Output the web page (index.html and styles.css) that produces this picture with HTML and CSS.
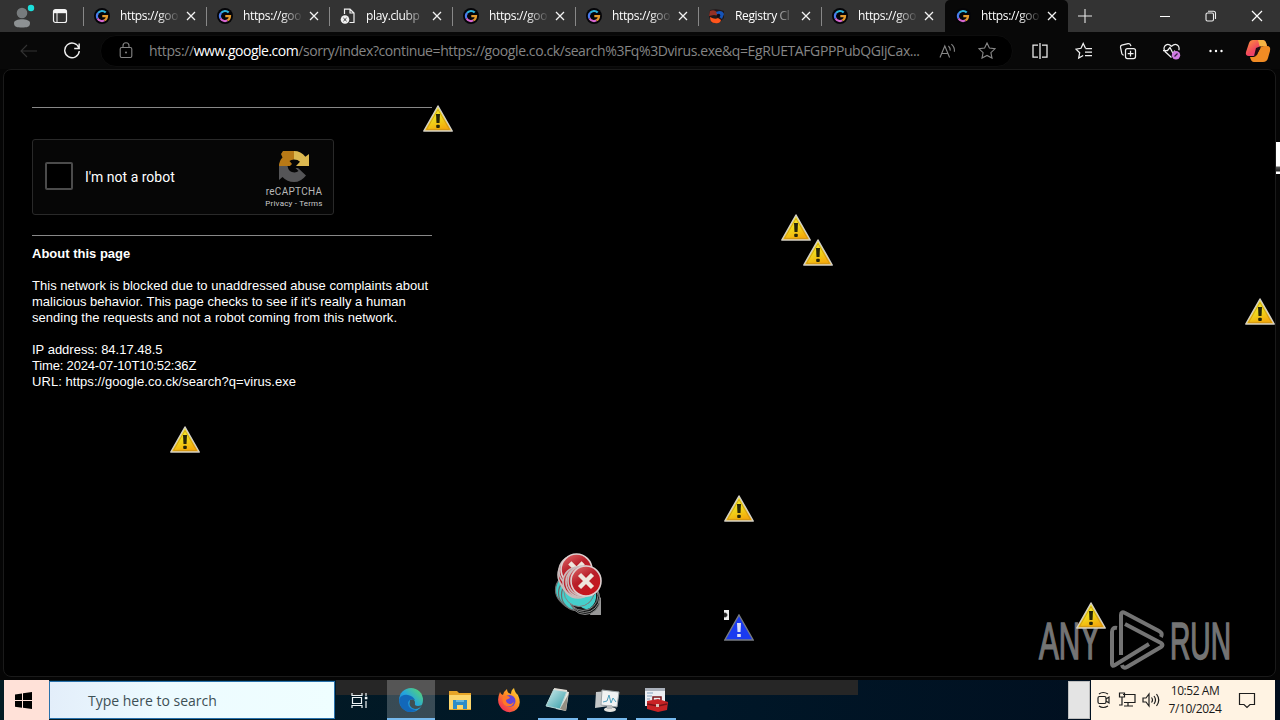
FILE: index.html
```html
<!DOCTYPE html>
<html lang="en">
<head>
<meta charset="utf-8">
<title>https://google.co.ck/search?q=virus.exe</title>
<link rel="stylesheet" href="styles.css">
</head>
<body>
<svg class="defs" width="0" height="0">
  <defs>
    <linearGradient id="gold" x1="0" y1="0" x2="0.4" y2="1"><stop offset="0" stop-color="#f8f83a"/><stop offset=".6" stop-color="#f0d81c"/><stop offset="1" stop-color="#f5ac0c"/></linearGradient>
    <linearGradient id="redball" x1="0" y1="0" x2="0.6" y2="1"><stop offset="0" stop-color="#e07070"/><stop offset=".5" stop-color="#b81e28"/><stop offset="1" stop-color="#c8141c"/></linearGradient>
    <linearGradient id="edge" x1="0" y1="1" x2="1" y2="0"><stop offset="0" stop-color="#1464bd"/><stop offset=".5" stop-color="#24a5df"/><stop offset="1" stop-color="#5fdc62"/></linearGradient>
    <linearGradient id="fire" x1="1" y1="0" x2="0.2" y2="1"><stop offset="0" stop-color="#ffe13a"/><stop offset=".5" stop-color="#ff8a22"/><stop offset="1" stop-color="#f0245c"/></linearGradient>
    <linearGradient id="pilot" x1="0" y1="0" x2="1" y2="1"><stop offset="0" stop-color="#ff9a3a"/><stop offset=".5" stop-color="#f0465e"/><stop offset="1" stop-color="#e03a9a"/></linearGradient>
    <linearGradient id="pad" x1="0" y1="0" x2="1" y2="1"><stop offset="0" stop-color="#d3eeee"/><stop offset="1" stop-color="#2f9ba6"/></linearGradient>
    <symbol id="x" viewBox="0 0 10 10"><path d="M1 1 9 9M9 1 1 9" stroke="#f2f2f2" stroke-width="1.3" fill="none"/></symbol>
    <symbol id="g" viewBox="0 0 16 16">
      <circle cx="8" cy="8" r="8" fill="#050508"/>
      <g fill="none" stroke-width="2.2">
        <path d="M11.7 4.6A5 5 0 0 0 4.1 4.9" stroke="#2fb4dc"/>
        <path d="M4.1 4.9A5 5 0 0 0 3.6 10.4" stroke="#4b7cf0"/>
        <path d="M3.6 10.4A5 5 0 0 0 10.4 12.4" stroke="#d567cf"/>
        <path d="M10.4 12.4A5 5 0 0 0 13 8.2H8.3" stroke="#e49a2c"/>
      </g>
    </symbol>
    <symbol id="warn" viewBox="0 0 30 27">
      <path d="M15 1 29.2 26H.8Z" fill="url(#gold)" stroke="#d4d0c4" stroke-width="1.5" stroke-linejoin="round"/>
      <path d="M15 4.5 26.4 24.4H3.6Z" fill="none" stroke="#c58c16" stroke-width=".7"/>
      <path d="M13 9h4l-.5 9h-3z" fill="#252408"/><rect x="13.2" y="19.7" width="3.6" height="3.3" rx="1" fill="#252408"/>
    </symbol>
    <symbol id="err" viewBox="0 0 32 32">
      <circle cx="16" cy="16" r="15" fill="url(#redball)" stroke="#ddd0d0" stroke-width="1.6"/>
      <path d="M9.5 9.5 22.5 22.5M22.5 9.5 9.5 22.5" stroke="#eee6dc" stroke-width="4.4"/>
    </symbol>
    <symbol id="ball" viewBox="0 0 32 32"><circle cx="16" cy="16" r="15" fill="url(#redball)" stroke="#c9bcbc" stroke-width="1.6"/></symbol>
  </defs>
</svg>

<div class="screen">
  <header class="tabstrip">
    <div class="lead">
      <svg class="avatar" width="24" height="28" viewBox="0 0 24 28"><circle cx="11" cy="13" r="5.3" fill="#777b7d"/><path d="M3 23c0-5 16-5 16 0 0 4-3 4.5-8 4.5S3 27 3 23Z" fill="#8d9193"/><circle cx="20" cy="8" r="3.2" fill="#1ce0dc"/></svg>
      <svg class="space" width="16" height="16" viewBox="0 0 16 16"><rect x="1.5" y="1.5" width="13" height="13" rx="2" fill="none" stroke="#f4f4f4" stroke-width="1.2"/><path d="M2 2h12v3.2H2z" fill="#f4f4f4"/><path d="M5 5v9" stroke="#f4f4f4"/></svg>
    </div>
    <div class="tab"><svg class="fav"><use href="#g"/></svg><span class="label">https://goo</span><svg class="close"><use href="#x"/></svg></div>
    <div class="tab"><svg class="fav"><use href="#g"/></svg><span class="label">https://goo</span><svg class="close"><use href="#x"/></svg></div>
    <div class="tab"><svg class="fav" viewBox="0 0 16 16"><path d="M4.5 6V1.2H10L14 5v9.5H9.5M10 1.2V5h4" fill="none" stroke="#f0f0f0" stroke-width="1.2"/><circle cx="5" cy="11.5" r="4.3" fill="#f0f0f0"/><path d="M3.4 10l3.2 3.2M6.6 10l-3.2 3.2" stroke="#333"/></svg><span class="label">play.clubp</span><svg class="close"><use href="#x"/></svg></div>
    <div class="tab"><svg class="fav"><use href="#g"/></svg><span class="label">https://goo</span><svg class="close"><use href="#x"/></svg></div>
    <div class="tab"><svg class="fav"><use href="#g"/></svg><span class="label">https://goo</span><svg class="close"><use href="#x"/></svg></div>
    <div class="tab"><svg class="fav" viewBox="0 0 16 16"><path d="M1 2Q8 0 15 3V10L10 15H3L0 9Z" fill="#211719"/><path d="M1 3q4-2 7 1l2 4-5-1-5 1z" fill="#943025"/><path d="M7 4q6-3 8 2l-2 5-4-3z" fill="#1554b8"/><path d="M1 9q5 3 8 1l3 2q-1 4-6 3-5 0-5-6" fill="#ff551c"/><circle cx="9.5" cy="7.5" r="1.8" fill="#120a18"/></svg><span class="label fade-early">Registry Cl</span><svg class="close"><use href="#x"/></svg></div>
    <div class="tab last"><svg class="fav"><use href="#g"/></svg><span class="label">https://goo</span><svg class="close"><use href="#x"/></svg></div>
    <div class="tab active"><svg class="fav"><use href="#g"/></svg><span class="label">https://goo</span><svg class="close"><use href="#x"/></svg></div>
    <svg class="plus" width="14" height="14" viewBox="0 0 14 14"><path d="M7 0v14M0 7h14" stroke="#e8e8e8" stroke-width="1.1"/></svg>
    <div class="window-buttons">
      <svg width="12" height="12" viewBox="0 0 12 12"><path d="M1 6.5h10" stroke="#fff"/></svg>
      <svg width="12" height="12" viewBox="0 0 12 12" fill="none" stroke="#eee" stroke-width="1.1"><rect x="1" y="3" width="7.5" height="8" rx="1.5"/><path d="M3 1.2h5.5a2 2 0 0 1 2 2V9"/></svg>
      <svg width="12" height="12" viewBox="0 0 12 12"><path d="M1 1 11 11M11 1 1 11" stroke="#fff" stroke-width="1.2"/></svg>
    </div>
  </header>

  <nav class="toolbar">
    <svg class="back" width="17" height="14" viewBox="0 0 17 14"><path d="M7 1 1 7l6 6M1 7h16" fill="none" stroke="#333" stroke-width="1.1"/></svg>
    <svg class="reload" width="18" height="18" viewBox="0 0 18 18"><path d="M16 6.2A7.3 7.3 0 1 0 16.3 9M16.2 1.5v5h-5" fill="none" stroke="#eee" stroke-width="1.4"/></svg>
    <div class="address">
      <svg class="lock" width="14" height="17" viewBox="0 0 14 17"><rect x="1.2" y="5.5" width="11.6" height="10" rx="1.5" fill="none" stroke="#858585" stroke-width="1.1"/><path d="M4 5.5V3.8a3 3 0 0 1 6 0v1.7" fill="none" stroke="#858585" stroke-width="1.1"/><circle cx="7" cy="10.5" r="1" fill="#858585"/></svg>
      <span class="url"><span class="u1">https://</span><b class="u2">www.google.com</b><span class="u3">/sorry/index?continue=https://google.co.ck/search%3Fq%3Dvirus.exe&amp;q=EgRUETAFGPPPubQGIjCax...</span></span>
      <svg class="read" width="17" height="16" viewBox="0 0 17 16" fill="none" stroke="#888" stroke-width="1.1"><path d="M1 14.5 5.8 3l4.8 11.5M2.6 10.5H9M9.4 3q2 1.7 1.8 4.6M12.4 1.2q3.5 3 3 7.5"/></svg>
      <svg class="star" width="18" height="17" viewBox="0 0 18 17"><path d="m9 1 2.4 5.1 5.6.7-4.1 3.8 1.1 5.5L9 13.4 4 16.1l1.1-5.5L1 6.8l5.6-.7Z" fill="none" stroke="#888" stroke-width="1.1"/></svg>
    </div>
    <div class="tools">
      <svg viewBox="0 0 18 18"><path d="M7 3H2v12h5M11 3h5v12h-5M9 1v16"/></svg>
      <svg viewBox="0 0 18 18"><path d="M10.5 6.3 8.2 1.5 6 6.3l-5 .8 3.7 3.6-1 5.3 4.5-2.5M10.5 6.5H17M10 10h7M10 13.5h7"/></svg>
      <svg viewBox="0 0 18 18"><rect x="6.5" y="6.5" width="10" height="10" rx="2"/><path d="M4.7 13Q3 13 2.8 11.5L1.5 5.2Q1.3 3.7 2.8 3.2L9 1.7q2-.3 2.6 1.4l.3 1.1M11.5 8.7v5.8M8.7 11.5h5.8"/></svg>
      <svg viewBox="0 0 18 18"><path d="M8.5 15.5 2 9.5Q.2 6.7 1.7 4.2 4.6.7 8.5 4.2q4.2-3.5 7 0 1 2 .3 4M0 8.5h4.5L7 5.5l3 6 1.8-3"/><circle cx="13" cy="13.2" r="4.2" fill="#cf79e1" stroke="none"/><path d="m11.5 14.5 3-3" stroke="#31213d"/></svg>
      <svg viewBox="0 0 18 18"><g fill="#fff" stroke="none"><circle cx="3.5" cy="9" r="1.2"/><circle cx="9" cy="9" r="1.2"/><circle cx="14.5" cy="9" r="1.2"/></g></svg>
    </div>
    <svg class="copilot" width="26" height="24" viewBox="0 0 26 24"><path d="M8 1h10q2 0 3 3l1 3h-4q-3 0-4 3l-2 4q-1 3-4 3H4q-4 0-3-4L4 4q1-3 4-3Z" fill="url(#pilot)"/><path d="M18 23H9q-3 0-4-5h3q3 0 4-3l3-5q1-3 4-3h3q4 0 3 5l-2 7q-1 4-5 4Z" fill="#f08b24"/><path d="M13 1h5q3 0 4 6h-4q-2 0-3 2z" fill="#f5b343"/><path d="m11 9 5-2-4 9-3 1z" fill="#210b12"/></svg>
  </nav>

  <main class="page">
    <div class="content">
      <div class="rule"></div>
      <section class="captcha">
        <div class="checkbox"></div>
        <span class="robot">I'm not a robot</span>
        <div class="brand">
          <svg width="32" height="32" viewBox="0 0 32 32"><path d="M5 1H16V9.5Q13 9.5 11.5 11L14 14l-2 2H1Q1 11 4.5 7.5L3 4Z" fill="#b87916"/><path d="M16 1q7 0 11.4 5.8L31 4v12H18l4-4.2Q20 9.5 16 9.5Z" fill="#dcb850"/><path d="M1 16h8.5q1 6.5 7 6.5 2.5 0 4-1.4L17.5 18H20l8 7.4Q23 32 16 32q-7 0-11.5-5L1 30Z" fill="#555557"/></svg>
          <span class="name">reCAPTCHA</span>
          <span class="legal">Privacy - Terms</span>
        </div>
      </section>
      <div class="rule second"></div>
      <div class="info">
        <b class="about">About this page</b>
        <p><span class="l1">This network is blocked due to unaddressed abuse complaints about</span><br><span class="l2">malicious behavior. This page checks to see if it's really a human</span><br><span class="l3">sending the requests and not a robot coming from this network.</span></p>
        <p><span class="l4">IP address: 84.17.48.5</span><br><span class="l5">Time: 2024-07-10T10:52:36Z</span><br><span class="l6">URL: https://google.co.ck/search?q=virus.exe</span></p>
      </div>
    </div>
  </main>

  <footer class="taskbar">
    <div class="start"><svg width="17" height="17" viewBox="0 0 17 17"><path d="M0 2.4 7 1.4V8H0ZM8 1.2 17 0V8H8ZM0 9h7v6.7L0 14.7ZM8 9h9v8L8 15.8Z"/></svg></div>
    <div class="search">Type here to search</div>
    <div class="taskview"><svg width="17" height="17" viewBox="0 0 17 17" fill="none" stroke="#eef4f6" stroke-width="1.2"><path d="M1 1v2.5h10V1M1 16v-2.5h10V16M1.5 5.5h9v6h-9zM15 1v3M15 9v7"/><path d="M13.8 6h2.6" stroke-width="2.5"/></svg></div>
    <div class="app current"><svg viewBox="0 0 26 26"><circle cx="13" cy="13" r="12" fill="url(#edge)"/><path d="M1.3 12Q4 7 10 8q5 1 7 5-6-2-7 3 0 7 9 7-5 3-10 1.5Q1 21 1.3 12Z" fill="#1268ba"/><path d="M12 13q5-2 5 3-1 3 3 3 3 0 5-2-3 5-8 5-7-1-5-9Z" fill="#3f5053"/></svg></div>
    <div class="app"><svg viewBox="0 0 26 26"><path d="M2 4h8l2 2h12v17H2z" fill="#e6a528"/><path d="M2 8h22v14H2z" fill="#fbd66d"/><path d="M6 13h14v9h-4v-4h-6v4H6z" fill="#2d8dc8"/><path d="M9 13h8v2H9z" fill="#67b7dc"/></svg></div>
    <div class="app"><svg viewBox="0 0 26 26"><path d="M4 5q1 3 3 3 1-4 4-6 0 4 4 5 0-4 3-6 1 5 4 7 4 9-1 14Q15 28 7 23-1 16 4 5Z" fill="url(#fire)"/><circle cx="13.5" cy="14" r="6" fill="#6746d7"/><path d="M7 9q6-1 7 2l-4 2q0 4 5 4l3-2q-2 6-8 4Q5 16 7 9Z" fill="#ff7828"/></svg></div>
    <div class="app open"><svg viewBox="0 0 26 26"><path d="m9 3 15 2-3 19-10-2z" fill="#e8e7df"/><path d="m9 2 13 2-7 18L1 19z" fill="url(#pad)" stroke="#b6d8d8"/><path d="m9 2 13 2" stroke="#dedbd4" stroke-width="2"/><path d="m15 22 6 2 2-16z" fill="#958f83"/></svg></div>
    <div class="app open"><svg viewBox="0 0 26 26"><path d="m2 5 13-1v15L1 21z" fill="#c4c7c8"/><path d="m8 3 17 2-2 15-16-2z" fill="#f1f3f3" stroke="#9ba3a6"/><path d="m9 15 4-1 2-6 2 8 2-5 3 4" fill="none" stroke="#4d9fbc"/><ellipse cx="16" cy="22.5" rx="6" ry="2.6" fill="#e4e3de"/><path d="M13 18h5v4h-5z" fill="#b7babb"/></svg></div>
    <div class="app open"><svg viewBox="0 0 26 26"><path d="M2 1h20v18H2z" fill="#eceef2"/><path d="M2 1h20v3H2z" fill="#aab1bb"/><path d="M4 6h6M4 9h5M4 12h3" stroke="#83a1bd"/><path d="M4 14 15 12l10 3-1 8-9 2-11-3z" fill="#c82325"/><path d="M10 13v-3h8v3M4 17l11 2 9-2" fill="none" stroke="#771317" stroke-width="1.5"/><path d="M13 17h3v3h-3z" fill="#d9c4b9"/></svg></div>
    <div class="peek"></div>
    <div class="tray">
      <svg class="cam" width="14" height="20" viewBox="0 0 14 20"><path d="M2 4q4-3 9 0M2 16q4 3 9 0"/><rect x="1" y="6.5" width="8" height="7" rx="1.5"/><path d="m9 9 3-2v6l-3-2"/></svg>
      <svg class="net" width="18" height="16" viewBox="0 0 18 16"><path d="M5 2.5h12v8H6M10 10.5V14M6 14h9M1.5 1h5v4h-5zM4 5v8H1"/></svg>
      <svg class="vol" width="18" height="16" viewBox="0 0 18 16"><path d="M1 6h3l3-4v12L4 10H1ZM9.5 5.5q2 2.5 0 5M12 4q3 4 0 8M14.5 2q4.5 6 0 12"/></svg>
      <div class="clock"><span>10:52 AM</span><span>7/10/2024</span></div>
      <svg class="note" width="18" height="17" viewBox="0 0 18 17"><path d="M1.5 1.5h15v11H12l-3 3-3-3H1.5Z"/></svg>
    </div>
    <div class="end"></div>
  </footer>

  <div class="desktop">
    <div class="smear"></div>
    <svg class="watermark" width="196" height="66" viewBox="0 0 196 66">
      <g fill="#747474" stroke="#747474" stroke-width="1.6" font-family="Liberation Sans, sans-serif" font-size="52"><text x="1" y="53" textLength="61" lengthAdjust="spacingAndGlyphs">ANY</text><text x="132" y="53" textLength="61" lengthAdjust="spacingAndGlyphs">RUN</text></g>
      <g fill="none" stroke="#747474" stroke-width="4" stroke-linejoin="round"><path d="M79 22q-5-1-5 4v32q0 3 3 1l34-21"/><path d="M83 49V9q0-4 4-2l34 18q4 2 2 6"/><path d="M87 18l36 19q3 2 0 4L89 61q-4 2-5-2"/></g>
    </svg>
    <svg class="warn w1"><use href="#warn"/></svg>
    <svg class="warn w2"><use href="#warn"/></svg>
    <svg class="warn w3"><use href="#warn"/></svg>
    <svg class="warn w4"><use href="#warn"/></svg>
    <svg class="warn w5"><use href="#warn"/></svg>
    <svg class="warn w6"><use href="#warn"/></svg>
    <svg class="warn w7"><use href="#warn"/></svg>
    <svg class="info-mark" viewBox="0 0 30 27"><path d="M15 1 29.2 26H.8Z" fill="#1a3af0" stroke="#777b82" stroke-width="1.4"/><path d="M13 9h4l-.5 9h-3zM13.2 20h3.6v3h-3.6z" fill="#dce0f8"/></svg>
    <div class="scrap edge-scrap"></div>
    <div class="scrap small-scrap"></div>
    <svg class="errors" width="50" height="66" viewBox="0 0 50 66">
      <path d="M38 58l9-12v18H36z" fill="#999"/>
      <g fill="#45cfcb" stroke="#6c6c6c" stroke-width="1.2"><circle cx="17" cy="39" r="15.5"/><circle cx="20" cy="42" r="15.5"/><circle cx="23" cy="44" r="15.5"/></g>
      <g fill="#151818" stroke="#858585" stroke-width="1"><circle cx="31" cy="48.5" r="15"/><circle cx="30.5" cy="46.5" r="15"/><circle cx="29" cy="44.5" r="15"/></g>
      <path d="M26 55q10 0 14-11l2-2q1 10-6 15-5 3-10-2z" fill="#45cfcb"/>
      <circle cx="25" cy="40.5" r="15" fill="#45cfcb" stroke="#858585"/>
      <use href="#ball" x="8" y="16" width="32" height="32"/><use href="#ball" x="5" y="12" width="32" height="32"/><use href="#ball" x="3" y="8" width="32" height="32"/><use href="#ball" x="4" y="4" width="32" height="32"/><use href="#err" x="6" y="2" width="33" height="33"/><use href="#ball" x="8" y="15" width="32" height="32"/><use href="#ball" x="11" y="15" width="32" height="32"/><use href="#ball" x="13" y="14" width="32" height="32"/><use href="#err" x="16" y="14" width="32" height="32"/>
    </svg>
  </div>
</div>
</body>
</html>
```
FILE: styles.css
```css
* { box-sizing: border-box; }
body { margin: 0; background: #000; }
svg { display: block; flex: none; }
.defs { position: absolute; }
.screen { position: relative; width: 1280px; height: 720px; overflow: hidden; display: flex; flex-direction: column; background: #050505; font-family: "Open Sans", "Noto Sans", sans-serif; }
.tabstrip { height: 32px; display: flex; align-items: center; background: #333; flex: none; }
.lead { width: 83px; height: 32px; display: flex; padding-left: 11px; flex: none; }
.space { margin: 8px 0 0 17px; }
.tab { width: 123px; height: 32px; flex: none; display: flex; align-items: center; padding-left: 10px; color: #fff; background: linear-gradient(#888, #888) 0 7px / 1px 19px no-repeat; }
.tab.last { width: 124px; }
.tab.active { background: #080808; border-radius: 5px 5px 0 0; width: 123px; padding-left: 9px; }
.fav { width: 16px; height: 16px; margin-left: 1px; }
.label { width: 61px; margin-left: 10px; white-space: nowrap; font: 12px/18px "Open Sans", sans-serif; letter-spacing: -.35px; mask-image: linear-gradient(90deg, #000 38px, transparent 60px); }
.fade-early { mask-image: linear-gradient(90deg, #000 42px, #0008 46px, transparent 62px); }
.close { width: 10px; height: 10px; margin-left: 5px; }
.plus { margin-left: 10px; }
.window-buttons { margin-left: auto; display: flex; gap: 34px; padding-right: 17px; }
.toolbar { height: 37px; flex: none; display: flex; align-items: center; background: #080808; padding-left: 20px; }
.reload { margin-left: 26px; }
.address { width: 913px; height: 32px; margin-left: 19px; border-radius: 16px; background: #000; border: 1px solid #0d0d0d; display: flex; align-items: center; padding-left: 18px; flex: none; }
.url { width: 772px; margin-left: 16px; display: flex; white-space: nowrap; font-size: 14px; line-height: 22px; color: #858585; flex: none; }
.u2 { font-weight: 400; color: #fff; letter-spacing: -.5px; }
.u1 { letter-spacing: -.38px; }
.u3 { letter-spacing: -.41px; }
.u1, .u2, .u3 { flex: none; }
.read { margin-left: 18px; }
.star { margin-left: 22px; }
.tools { display: flex; gap: 26px; margin-left: 18px; }
.tools svg { width: 18px; height: 18px; fill: none; stroke: #f0f0f0; stroke-width: 1.25; }
.copilot { margin-left: 20px; }
.page { width: 1273px; height: 608px; margin-left: 3px; flex: none; border: 1px solid #1a1a1a; border-radius: 8px; background: #000; padding: 37px 28px; color: #fff; }
.content { width: 400px; }
.rule { height: 1px; background: #888; }
.captcha { margin-top: 31px; width: 302px; height: 76px; border: 1px solid #292929; border-radius: 3px; background: #060606; display: flex; align-items: center; padding-left: 12px; }
.checkbox { width: 28px; height: 28px; flex: none; border: 2px solid #4b4b4b; border-radius: 2px; background: #000; margin-top: -2px; }
.robot { width: 171px; flex: none; margin-left: 12px; font: 14px/17px Roboto, sans-serif; }
.brand { width: 76px; flex: none; display: flex; flex-direction: column; align-items: center; color: #b8b8b8; font-family: Roboto, sans-serif; padding-top: 4px; }
.name { font-size: 10px; line-height: 11px; margin-top: 4px; letter-spacing: .3px; }
.legal { font-size: 8px; line-height: 10px; margin-top: 2px; letter-spacing: .2px; color: #ccc; }
.rule.second { margin-top: 20px; }
.info { font: 13px/16px "Liberation Sans", Arial, sans-serif; padding-top: 10px; white-space: nowrap; }
.about { display: block; }
.info p { margin: 16px 0; }
.l1, .l2, .l3 { letter-spacing: .025px; }
.l5 { letter-spacing: -.17px; }
.l6 { letter-spacing: .05px; }
.taskbar { height: 40px; margin-top: 3px; background: linear-gradient(90deg, #031b23, #001728 55%, #010c1c); display: flex; flex: none; position: relative; }
.start { width: 45px; margin-left: 4px; background: #ffe1d8; display: flex; align-items: center; justify-content: center; padding-right: 6px; }
.search { width: 286px; height: 38px; margin-top: 1px; border: 1px solid #2871ac; background: linear-gradient(90deg, #e3eefa, #edfbff 40%, #effeff); color: #3d5055; padding: 8px 0 0 38px; font-size: 14px; line-height: 22px; }
.taskview { width: 52px; display: flex; align-items: center; justify-content: center; padding-right: 3px; position: relative; z-index: 3; }
.app { width: 48px; margin-right: 1px; display: flex; align-items: center; justify-content: center; position: relative; z-index: 3; }
.app svg { width: 26px; height: 26px; }
.current { background: #ffffff38; border-bottom: 2px solid #76b9ed; padding-top: 2px; }
.app.open::after { content: ""; align-self: flex-end; width: 40px; height: 2px; margin-left: -33px; margin-right: -7px; background: #76b9ed; }
.peek { width: 22px; height: 38px; margin: 1px 1px 0 auto; background: #e4e4e4; border: 1px solid #bebebe; }
.tray { width: 184px; flex: none; background: #fff3e3; display: flex; align-items: center; color: #191919; padding-left: 6px; }
.tray svg { fill: none; stroke: #1d1d1d; stroke-width: 1.2; }
.net { margin-left: 7px; }
.vol { margin-left: 6px; }
.clock { width: 56px; margin-left: 7px; display: flex; flex-direction: column; align-items: center; font-size: 12px; line-height: 18px; letter-spacing: -.45px; }
.note { margin-left: 15px; }
.end { width: 5px; }
.desktop { position: absolute; inset: 0; pointer-events: none; z-index: 2; }
.desktop > * { position: absolute; }
.smear { left: 336px; top: 680px; width: 522px; height: 15px; background: #262626; z-index: -1; }
.watermark { left: 1038px; top: 606px; }
.warn, .info-mark { width: 30px; height: 27px; }
.w1 { left: 423px; top: 105px; }
.w2 { left: 781px; top: 214px; }
.w3 { left: 803px; top: 239px; }
.w4 { left: 1245px; top: 298px; }
.w5 { left: 170px; top: 426px; }
.w6 { left: 724px; top: 495px; }
.w7 { left: 1076px; top: 602px; }
.info-mark { left: 724px; top: 614px; }
.scrap { background: #eee; }
.edge-scrap { left: 1276px; top: 142px; width: 4px; height: 32px; background: linear-gradient(#fff 24px, #555 25px, #222 29px, #fff 30px); }
.small-scrap { left: 724px; top: 610px; width: 5px; height: 10px; background: radial-gradient(circle at 1px 5px, #222 1.5px, #eee 3px); }
.errors { left: 554px; top: 551px; }
```
